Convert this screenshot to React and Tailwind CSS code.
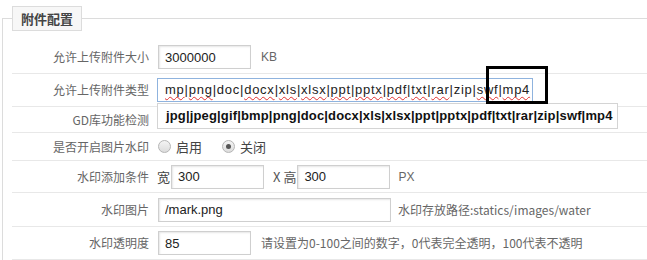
import React from 'react';

const labelFont = { fontFamily: '"Noto Sans CJK SC", "Liberation Sans", sans-serif' };
const inputFont = { fontFamily: '"Liberation Sans", "Noto Sans CJK SC", sans-serif' };

const inputCls =
    'h-[24px] border border-[#cfcfcf] bg-white px-[6px] text-[13px] text-[#222] outline-none shadow-[inset_1px_1px_2px_rgba(0,0,0,0.1)]';

const typeParts = ['mp', 'png', 'doc', 'docx', 'xls', 'xlsx', 'ppt', 'pptx', 'pdf', 'txt', 'rar', 'zip', 'swf', 'mp4'];
const noSquiggle = ['doc', 'zip'];

function Row({ label, h, children }) {
    return (
        <div className={`flex items-center border-b border-[#e8e8e8] ${h}`}>
            <div className="w-[146px] shrink-0 pr-[9px] text-right text-[12px] text-[#666]" style={labelFont}>
                {label}
            </div>
            <div className="flex items-center text-[12px] text-[#666]" style={labelFont}>
                {children}
            </div>
        </div>
    );
}

function Radio({ checked, label }) {
    return (
        <label className="flex items-center gap-[5px]">
            <span className="w-[13px] h-[13px] rounded-full border border-[#b5b5b5] bg-gradient-to-b from-[#f4f4f4] to-[#dcdcdc] flex items-center justify-center">
                {checked && <span className="w-[5px] h-[5px] rounded-full bg-[#555]" />}
            </span>
            <span className="text-[13px] text-[#444]">{label}</span>
        </label>
    );
}

export default function App() {
    return (
        <div className="relative w-[647px] h-[260px] overflow-hidden bg-white">
            <fieldset className="mt-[6px] ml-[2px] w-[720px] border border-[#dcdcdc] pl-[9px] pb-4">
                <legend
                    className="h-[25px] px-[8px] border border-[#dcdcdc] bg-[#f7f7f7] text-[13px] font-bold text-[#444] leading-[23px]"
                    style={labelFont}
                >
                    附件配置
                </legend>

                {/* Settings rows */}
                <div className="mt-[10px]">
                    <Row label="允许上传附件大小" h="h-[33px]">
                        <input readOnly value="3000000" className={`${inputCls} w-[93px]`} style={inputFont} />
                        <span className="ml-[10px]" style={inputFont}>KB</span>
                    </Row>

                    <Row label="允许上传附件类型" h="h-[33px]">
                        <div
                            className="h-[24px] w-[376px] -ml-px border border-[#8fb3de] bg-white pl-[7px] text-[13px] tracking-[0.75px] text-[#222] flex items-center whitespace-nowrap overflow-hidden"
                            style={inputFont}
                        >
                            {typeParts.map((p, i) => (
                                <React.Fragment key={i}>
                                    <span className={noSquiggle.includes(p) ? '' : 'underline decoration-wavy decoration-[#e03030] decoration-1 underline-offset-2'}>
                                        {p}
                                    </span>
                                    {i < typeParts.length - 1 && '|'}
                                </React.Fragment>
                            ))}
                        </div>
                    </Row>

                    <Row label="GD库功能检测" h="h-[26px]" />

                    <Row label="是否开启图片水印" h="h-[28px]">
                        <div className="flex items-center gap-[20px]">
                            <Radio label="启用" />
                            <Radio checked label="关闭" />
                        </div>
                    </Row>

                    <Row label="水印添加条件" h="h-[32px]">
                        <span className="-ml-px mr-px text-[13px] text-[#444]">宽</span>
                        <input readOnly value="300" className={`${inputCls} w-[93px]`} style={inputFont} />
                        <span className="ml-[9px] text-[13px] text-[#555]">X 高</span>
                        <input readOnly value="300" className={`${inputCls} w-[93px] ml-px`} style={inputFont} />
                        <span className="ml-[8px]" style={inputFont}>PX</span>
                    </Row>

                    <Row label="水印图片" h="h-[34px]">
                        <input readOnly value="/mark.png" className={`${inputCls} w-[233px]`} style={inputFont} />
                        <span className="ml-[7px]">水印存放路径:statics/images/water</span>
                    </Row>

                    <Row label="水印透明度" h="h-[33px]">
                        <input readOnly value="85" className={`${inputCls} w-[93px]`} style={inputFont} />
                        <span className="ml-[10px]">请设置为0-100之间的数字，0代表完全透明，100代表不透明</span>
                    </Row>
                </div>
            </fieldset>

            {/* Autocomplete dropdown */}
            <div
                className="absolute left-[157px] top-[103px] w-[461px] h-[26px] border border-[#d4d4d4] bg-white pl-[8px] flex items-center text-[13px] tracking-[0.15px] font-bold text-[#111] whitespace-nowrap"
                style={inputFont}
            >
                jpg|jpeg|gif|bmp|png|doc|docx|xls|xlsx|ppt|pptx|pdf|txt|rar|zip|swf|mp4
            </div>

            {/* Annotation box */}
            <div className="absolute left-[486px] top-[66px] w-[62px] h-[38px] border-[3px] border-black" />
        </div>
    );
}
